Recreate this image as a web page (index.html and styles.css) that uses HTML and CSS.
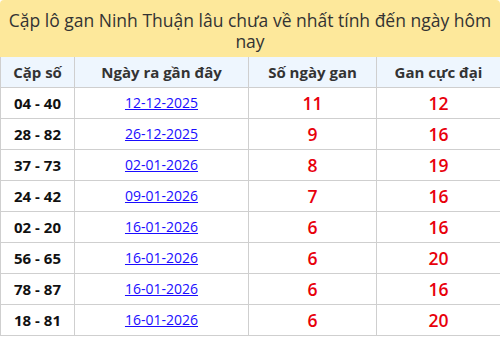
FILE: index.html
```html
<!DOCTYPE html>
<html lang="vi">
<head>
<meta charset="utf-8">
<link rel="stylesheet" href="styles.css">
</head>
<body>
<div class="wrap">
  <div class="title">Cặp lô gan Ninh Thuận lâu chưa về nhất tính đến ngày hôm nay</div>
  <table class="tbl">
    <colgroup>
      <col class="c1"><col class="c2"><col class="c3"><col class="c4">
    </colgroup>
    <thead>
      <tr><th>Cặp số</th><th>Ngày ra gần đây</th><th>Số ngày gan</th><th>Gan cực đại</th></tr>
    </thead>
    <tbody>
      <tr><td class="pair">04 - 40</td><td><a href="#">12-12-2025</a></td><td class="num">11</td><td class="num">12</td></tr>
      <tr><td class="pair">28 - 82</td><td><a href="#">26-12-2025</a></td><td class="num">9</td><td class="num">16</td></tr>
      <tr><td class="pair">37 - 73</td><td><a href="#">02-01-2026</a></td><td class="num">8</td><td class="num">19</td></tr>
      <tr><td class="pair">24 - 42</td><td><a href="#">09-01-2026</a></td><td class="num">7</td><td class="num">16</td></tr>
      <tr><td class="pair">02 - 20</td><td><a href="#">16-01-2026</a></td><td class="num">6</td><td class="num">16</td></tr>
      <tr><td class="pair">56 - 65</td><td><a href="#">16-01-2026</a></td><td class="num">6</td><td class="num">20</td></tr>
      <tr><td class="pair">78 - 87</td><td><a href="#">16-01-2026</a></td><td class="num">6</td><td class="num">16</td></tr>
      <tr><td class="pair">18 - 81</td><td><a href="#">16-01-2026</a></td><td class="num">6</td><td class="num">20</td></tr>
    </tbody>
  </table>
</div>
</body>
</html>
```
FILE: styles.css
```css
html, body {
  margin: 0;
  padding: 0;
  background: #fff;
}
body {
  font-family: "Open Sans", "Noto Sans", sans-serif;
  color: #222;
}
.wrap {
  width: 500px;
}
.title {
  background: #fde89b;
  color: #333;
  font-size: 17.5px;
  font-weight: 500;
  line-height: 21px;
  text-align: center;
  padding: 10px 8px 5px;
  height: 42px;
  border-radius: 4px 4px 0 0;
}
.tbl {
  width: 500px;
  border-collapse: collapse;
  table-layout: fixed;
}
.c1 { width: 74px; }
.c2 { width: 174px; }
.c3 { width: 128px; }
.c4 { width: 124px; }
.tbl th, .tbl td {
  border: 1px solid #cfcfcf;
  text-align: center;
  height: 30px;
  line-height: 20px;
  padding: 0;
}
.tbl th {
  background: #eef6fe;
  color: #333;
  font-size: 15px;
  font-weight: 700;
  border-top: none;
}
.tbl td {
  font-size: 14px;
}
.tbl td.pair {
  font-weight: 700;
  color: #111;
  font-size: 15px;
}
.tbl a {
  color: #1a0dff;
  text-decoration: underline;
}
.tbl td.num {
  color: #e8000b;
  font-weight: 600;
  font-size: 17.5px;
}
```
